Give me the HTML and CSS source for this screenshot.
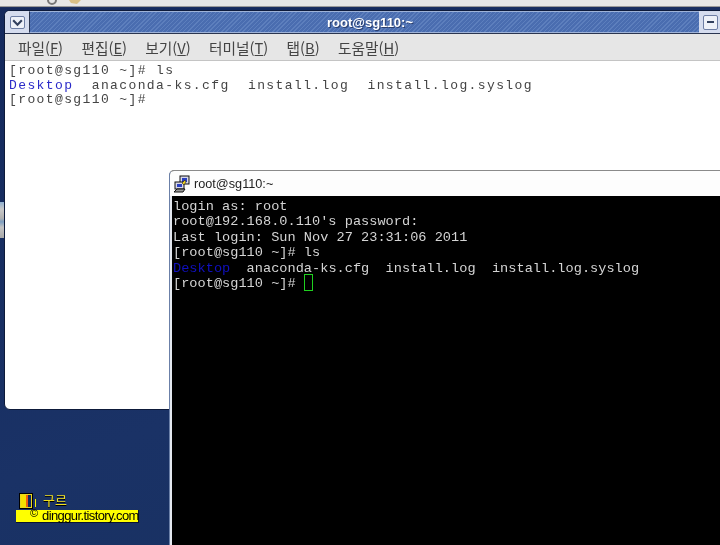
FILE: index.html
```html
<!DOCTYPE html>
<html lang="ko">
<head>
<meta charset="utf-8">
<title>root@sg110:~</title>
<link rel="stylesheet" href="styles.css">
</head>
<body>
<div class="desktop">
  <div class="topstrip">
    <svg class="topicons" width="90" height="6" viewBox="0 0 90 6"><path d="M47 0a5 5 0 0 0 10 0h-2a3 3 0 0 1-6 0z" fill="#777"/><path d="M69 0l2 3 6 1 4-4z" fill="#d8bf86"/></svg>
  </div>
  <div class="sideicons"><span class="sideicon"></span></div>

  <section class="gnome">
    <header class="gnome-title">
      <span class="wbtn"><svg width="12" height="8" viewBox="0 0 12 8"><path d="M2 2l4 4 4-4" fill="none" stroke="#33415f" stroke-width="2"/></svg></span>
      <div class="hatch"><span class="gnome-name">root@sg110:~</span></div>
      <span class="wbtn wbtn-right"><span class="dash"></span></span>
    </header>
    <nav class="menubar">
      <span>파일(<u>F</u>)</span><span>편집(<u>E</u>)</span><span>보기(<u>V</u>)</span><span>터미널(<u>T</u>)</span><span>탭(<u>B</u>)</span><span>도움말(<u>H</u>)</span>
    </nav>
    <pre class="term-a">[root@sg110 ~]# ls
<span class="blue">Desktop</span>  anaconda-ks.cfg  install.log  install.log.syslog
[root@sg110 ~]#</pre>
  </section>

  <section class="putty">
    <header class="putty-title">
      <svg class="putty-icon" width="18" height="18" viewBox="0 0 18 18">
        <rect x="7" y="1" width="9" height="8" fill="#d8d8e8" stroke="#111"/><rect x="9" y="3" width="5" height="4" fill="#2b3fc0"/>
        <rect x="2" y="7" width="9" height="7" fill="#d8d8e8" stroke="#111"/><rect x="4" y="9" width="5" height="3" fill="#2b3fc0"/>
        <path d="M1 17l3-3h8l-2 3z" fill="#999" stroke="#111"/><path d="M9 8l3-3 1 2-2 3z" fill="#f0d020" stroke="#222" stroke-width=".6"/>
      </svg>
      <span>root@sg110:~</span>
    </header>
    <pre class="term-b">login as: root
root@192.168.0.110's password:
Last login: Sun Nov 27 23:31:06 2011
[root@sg110 ~]# ls
<span class="navy">Desktop</span>  anaconda-ks.cfg  install.log  install.log.syslog
[root@sg110 ~]# <span class="cursor"></span></pre>
  </section>

  <div class="stamp">
    <div class="stamp-top">
      <span class="door"></span><span class="bang"></span><span class="stamp-name">구르</span>
    </div>
    <div class="stamp-bar"><span class="copy">©</span><span class="stamp-url">dinggur.tistory.com</span></div>
  </div>
</div>
</body>
</html>
```

FILE: styles.css
```css
html, body { margin: 0; padding: 0; }
body { width: 720px; height: 545px; overflow: hidden; }

.desktop {
  position: relative;
  width: 720px;
  height: 545px;
  overflow: hidden;
  background: linear-gradient(160deg, #14295c 0%, #1a3266 60%, #17305f 100%);
  filter: blur(0.35px);
}

.topstrip {
  height: 6px;
  background: #e6e6e6;
  border-bottom: 1px solid #9a9a9a;
  box-shadow: 0 1px 0 #1c2f60;
}
.topicons { display: block; }

.sideicons { position: absolute; left: 0; top: 202px; width: 4px; height: 36px; }
.sideicon { display: block; height: 36px; background: linear-gradient(#8fb0d0, #c8c8c8 20%, #b0b0b0 45%, #7d9ec0 55%, #c4c4c4 70%, #a8a8a8); }

.gnome {
  position: absolute;
  left: 4px;
  top: 10px;
  width: 730px;
  height: 400px;
  background: #fff;
  border: 1px solid #0d1a3a;
  border-radius: 6px;
  box-sizing: border-box;
  overflow: hidden;
  display: flex;
  flex-direction: column;
}
.gnome-title {
  height: 23px;
  display: flex;
  background: #dfe5f2;
  border-bottom: 1px solid #2a3550;
  box-sizing: border-box;
  flex: none;
}
.wbtn {
  width: 24px;
  flex: none;
  display: flex;
  align-items: center;
  justify-content: center;
  background: #d5dcee;
  position: relative;
}
.wbtn svg {
  width: 15px;
  height: 13px;
  padding: 0;
  background: #eef1f8;
  border: 1px solid #6e7ea4;
  border-radius: 2px;
  box-sizing: border-box;
}
.wbtn-right {
  position: absolute;
  left: 694px;
  top: 0;
  height: 22px;
  width: 30px;
  justify-content: flex-start;
  padding-left: 4px;
  box-sizing: border-box;
  background: #d5dcee;
}
.dash {
  display: block;
  width: 13px;
  height: 13px;
  background: linear-gradient(#33415f, #33415f) center / 7px 2px no-repeat #eef1f8;
  border: 1px solid #6e7ea4;
  border-radius: 2px;
}
.hatch {
  flex: 1;
  border-top: 1px solid #9fb3d8;
  border-bottom: 1px solid #9fb3d8;
  border-left: 1px solid #2a3550;
  background: repeating-linear-gradient(135deg, #4a6db0 0 2px, #5d7fbd 2px 3px);
  position: relative;
}
.gnome-name {
  position: absolute;
  left: 297px;
  top: 3px;
  font: bold 13px/16px "Liberation Sans", "Noto Sans CJK KR", sans-serif;
  color: #fff;
  text-shadow: 1px 1px 0 #2b3f6e;
}
.menubar {
  height: 27px;
  flex: none;
  display: flex;
  align-items: center;
  gap: 18.3px;
  padding: 2px 0 0 13px;
  box-sizing: border-box;
  background: #e6e6e6;
  border-bottom: 1px solid #c4c4c4;
  font: 14.7px/16px "Noto Sans CJK KR", "Liberation Sans", sans-serif;
  color: #444;
}
.term-a {
  margin: 0;
  padding: 3px 0 0 4px;
  font: 13px/14.5px "Liberation Mono", monospace;
  letter-spacing: 1.39px;
  color: #444;
}
.blue { color: #2a2ac8; }

.putty {
  position: absolute;
  left: 169px;
  top: 170px;
  width: 560px;
  height: 380px;
  background: #000;
  border: 1px solid #8a8a8a;
  border-left-color: #6b80a8;
  border-radius: 5px 0 0 0;
  box-sizing: border-box;
  overflow: hidden;
}
.putty-title {
  height: 25px;
  display: flex;
  align-items: center;
  gap: 3px;
  padding-left: 3px;
  background: #fdfdfd;
  font: 12.7px/16px "Liberation Sans", sans-serif;
  color: #222;
}
.putty-icon { flex: none; }
.term-b {
  margin: 0;
  height: 100%;
  padding: 3px 0 0 1px;
  border-left: 2px solid #e4e8f0;
  font: 13.6px/15.4px "Liberation Mono", monospace;
  letter-spacing: .02px;
  color: #d4d4d4;
}
.navy { color: #1010c0; }
.cursor {
  display: inline-block;
  width: 7px;
  height: 15px;
  margin-top: -2px;
  border: 1px solid #1fd01f;
  vertical-align: top;
}

.stamp { position: absolute; left: 16px; top: 494px; width: 123px; }
.stamp-top { display: flex; align-items: flex-start; height: 16px; padding-left: 4px; }
.door {
  width: 10px;
  height: 12px;
  background: linear-gradient(90deg, #f7e000 0 50%, #f06010 50% 75%, #14295c 75%);
  border: 1px solid #e8d820;
  outline: 1px solid #000;
}
.bang { width: 1px; height: 8px; margin: 5px 0 0 3px; background: #f7f000; }
.stamp-name {
  margin: -3px 0 0 7px;
  font: 13px/18px "Noto Sans CJK KR", sans-serif;
  color: #f0e020;
  text-shadow: 0 1px 0 #000;
}
.stamp-bar {
  height: 12px;
  background: #ffff00;
  font: 13px/12px "Liberation Sans", sans-serif;
  color: #000;
  border-bottom: 1px solid #0a1430;
  border-right: 1px solid #0a1430;
  white-space: nowrap;
  display: flex;
  position: relative;
}
.copy {
  position: absolute;
  left: 14px;
  top: -2px;
  font-size: 11px;
  line-height: 11px;
}
.stamp-url {
  margin-left: 26px;
  letter-spacing: -.6px;
}
```
